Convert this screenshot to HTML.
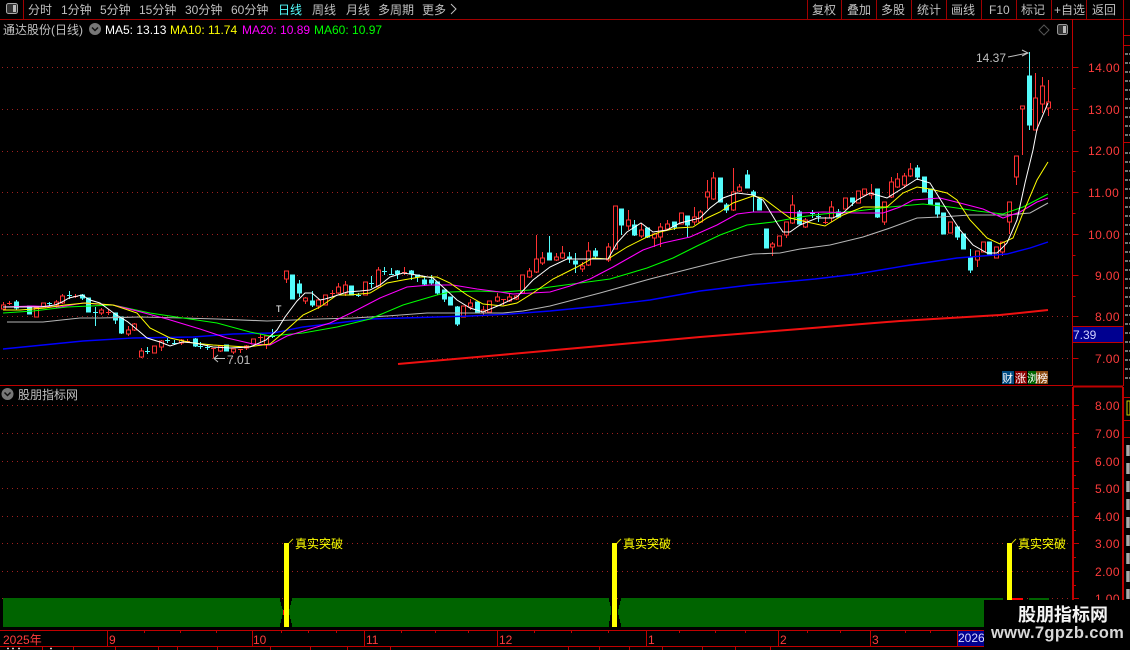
<!DOCTYPE html>
<html><head><meta charset="utf-8">
<style>
html,body{margin:0;padding:0;background:#000;width:1130px;height:650px;overflow:hidden}
svg{display:block;position:absolute;left:0;top:0}
text{font-family:"Liberation Sans","WenQuanYi Zen Hei","Noto Sans CJK SC",sans-serif;font-size:12px}
.t{fill:#c0c0c0}
.a{fill:#ff3c3c;font-size:13px;font-family:"Liberation Sans",sans-serif;letter-spacing:.4px}
.l{fill:#ff3c3c;font-size:13px}
.y{fill:#ffff00;font-size:12px}
</style></head><body>
<svg width="1130" height="650" viewBox="0 0 1130 650" xmlns="http://www.w3.org/2000/svg">
<rect width="1130" height="650" fill="#000"/>
<!-- toolbar -->
<g stroke="#a00000" stroke-width="1" fill="none" shape-rendering="crispEdges">
<path d="M0 19.500H1130M23.500 0V19M807.500 0V19M841.500 0V19M876.500 0V19M911.500 0V19M946.500 0V19M981.500 0V19M1016.500 0V19M1051.500 0V19M1086.500 0V19M1123.500 0V19"/>
</g>
<rect x="6.500" y="3.500" width="11" height="10" rx="2" fill="#333" stroke="#aaa"/>
<rect x="13" y="5" width="3" height="7" fill="#bbb"/>
<g class="t">
<text x="28" y="14">分时</text><text x="61" y="14">1分钟</text><text x="100" y="14">5分钟</text><text x="139" y="14">15分钟</text><text x="185" y="14">30分钟</text><text x="231" y="14">60分钟</text>
<text x="278" y="14" style="fill:#54fcfc">日线</text><text x="312" y="14">周线</text><text x="346" y="14">月线</text><text x="378" y="14">多周期</text><text x="422" y="14">更多</text>
<text x="812" y="14">复权</text><text x="847" y="14">叠加</text><text x="881" y="14">多股</text><text x="917" y="14">统计</text><text x="951" y="14">画线</text><text x="989" y="14">F10</text><text x="1021" y="14">标记</text><text x="1054" y="14">+自选</text><text x="1092" y="14">返回</text>
</g>
<path d="M451 4l5 5-5 5" fill="none" stroke="#c0c0c0"/>
<!-- header -->
<text x="3" y="34" class="t">通达股份(日线)</text>
<circle cx="95" cy="29" r="6" fill="#777"/><path d="M92 27.500l3 3 3-3" fill="none" stroke="#111" stroke-width="1.500"/>
<text x="105" y="34" fill="#fff">MA5: 13.13</text>
<text x="170" y="34" fill="#ff0">MA10: 11.74</text>
<text x="242" y="34" fill="#f0f">MA20: 10.89</text>
<text x="314" y="34" fill="#0f0">MA60: 10.97</text>
<path d="M1044 25l5 5-5 5-5-5z" fill="none" stroke="#555"/>
<rect x="1057.500" y="24.500" width="10" height="10" rx="2" fill="#333" stroke="#999"/><rect x="1063" y="26" width="3" height="7" fill="#bbb"/>
<!-- grid main -->
<g stroke="#a02020" stroke-width="1" stroke-dasharray="1 4" shape-rendering="crispEdges">
<path d="M2 67.500H1070M2 109.500H1070M2 151.500H1070M2 192.500H1070M2 234.500H1070M2 275.500H1070M2 316.500H1070M2 358.500H1070"/>
<path d="M2 405.500H1070M2 433.500H1070M2 461.500H1070M2 488.500H1070M2 516.500H1070M2 543.500H1070M2 571.500H1070M2 598.500H1070"/>
</g>
<!-- candle wicks & crosses -->
<g fill="none" stroke="#ff3232" stroke-width="1" shape-rendering="crispEdges">
<path d="M3.500 302V310M9.500 301V305M7 303.500h5M36.500 308V317M43.500 303V307M56.500 300V308M62.500 294V304M75.500 294V298M73 296.500h5M101.500 308V315M108.500 309V315M106 312.500h5M128.500 326V336M134.500 323V331M141.500 348V358M154.500 346V353M161.500 340V351M181.500 339V345M187.500 339V343M185 341.500h5M213.500 348V358M211 348.500h5M220.500 345V352M233.500 349V354M240.500 349V353M238 349.500h5M246.500 345V350M253.500 339V344M260.500 334V342M258 337.500h5M266.500 335V349M286.500 271V283M305.500 297V304M318.500 299V309M325.500 295V305M332.500 290V297M330 293.500h5M338.500 283V294M345.500 281V296M365.500 282V295M378.500 267V288M404.500 267V275M402 272.500h5M463.500 306V317M470.500 299V310M483.500 306V316M489.500 301V312M497.500 293V302M503.500 299V305M501 299.500h5M509.500 293V302M516.500 295V300M522.500 275V293M529.500 268V278M536.500 235V273M542.500 252V265M556.500 253V261M562.500 246V259M582.500 262V272M588.500 242V266M608.500 243V262M615.500 206V249M628.500 210V230M641.500 223V238M654.500 233V247M660.500 223V247M667.500 220V230M681.500 213V224M694.500 207V225M700.500 210V223M707.500 180V209M713.500 172V200M733.500 168V211M739.500 184V192M772.500 242V256M779.500 236V246M786.500 222V238M792.500 195V224M805.500 218V228M825.500 217V224M823 222.500h5M831.500 201V222M845.500 198V209M858.500 191V203M864.500 189V195M871.500 184V199M884.500 202V225M891.500 177V198M897.500 173V188M904.500 173V188M910.500 163V177M950.500 222V233M977.500 251V267M983.500 242V252M996.500 247V258M1002.500 242V256M1009.500 202V234M1016.500 156V185M1022.500 106V155M1035.500 73V130M1042.500 77V113M1048.500 80V116"/>
</g>
<g fill="#000" stroke="#ff3232" stroke-width="1" shape-rendering="crispEdges">
<path d="M1.500 305h4v4h-4zM34.500 308h4v9h-4zM41.500 303h4v4h-4zM54.500 302h4v3h-4zM60.500 296h4v7h-4zM99.500 310h4v3h-4zM126.500 330h4v4h-4zM132.500 324h4v6h-4zM139.500 351h4v6h-4zM152.500 346h4v7h-4zM159.500 341h4v6h-4zM179.500 340h4v3h-4zM218.500 346h4v5h-4zM231.500 349h4v3h-4zM244.500 346h4v2h-4zM251.500 339h4v5h-4zM264.500 336h4v9h-4zM284.500 271h4v8h-4zM303.500 298h4v3h-4zM316.500 300h4v6h-4zM323.500 295h4v10h-4zM336.500 287h4v6h-4zM343.500 285h4v8h-4zM363.500 282h4v13h-4zM376.500 270h4v17h-4zM461.500 306h4v11h-4zM468.500 303h4v4h-4zM481.500 310h4v3h-4zM487.500 301h4v11h-4zM495.500 297h4v4h-4zM507.500 297h4v4h-4zM514.500 296h4v3h-4zM520.500 275h4v18h-4zM527.500 271h4v6h-4zM534.500 259h4v13h-4zM540.500 258h4v5h-4zM554.500 257h4v3h-4zM560.500 253h4v5h-4zM580.500 266h4v3h-4zM586.500 251h4v14h-4zM606.500 247h4v13h-4zM613.500 206h4v43h-4zM626.500 220h4v6h-4zM639.500 230h4v6h-4zM652.500 234h4v4h-4zM658.500 227h4v10h-4zM665.500 224h4v5h-4zM679.500 213h4v11h-4zM692.500 217h4v5h-4zM698.500 212h4v10h-4zM705.500 192h4v5h-4zM711.500 178h4v21h-4zM731.500 192h4v18h-4zM737.500 187h4v4h-4zM770.500 244h4v3h-4zM777.500 236h4v10h-4zM784.500 222h4v13h-4zM790.500 205h4v18h-4zM803.500 220h4v7h-4zM829.500 207h4v11h-4zM843.500 198h4v11h-4zM856.500 191h4v12h-4zM862.500 189h4v6h-4zM869.500 193h4v2h-4zM882.500 202h4v20h-4zM889.500 182h4v15h-4zM895.500 179h4v8h-4zM902.500 176h4v9h-4zM908.500 169h4v7h-4zM948.500 222h4v11h-4zM975.500 251h4v9h-4zM981.500 242h4v10h-4zM994.500 247h4v11h-4zM1000.500 242h4v10h-4zM1007.500 202h4v20h-4zM1014.500 156h4v21h-4zM1020.500 106h4v3h-4zM1033.500 98h4v32h-4zM1040.500 86h4v18h-4zM1046.500 102h4v6h-4z"/>
</g>
<g fill="none" stroke="#54fcfc" stroke-width="1" shape-rendering="crispEdges">
<path d="M16.500 300V310M49.500 302V306M47 303.500h5M69.500 291V299M67 295.500h5M82.500 294V300M95.500 307V326M93 312.500h5M115.500 313V324M121.500 317V334M147.500 347V354M145 351.500h5M167.500 337V343M165 340.500h5M174.500 340V345M172 343.500h5M195.500 338V347M200.500 342V349M198 346.500h5M207.500 345V350M205 347.500h5M272.500 329V338M270 336.500h5M299.500 280V297M312.500 291V307M358.500 293V297M356 295.500h5M371.500 276V288M369 283.500h5M384.500 267V275M382 271.500h5M391.500 268V275M389 274.500h5M397.500 270V279M411.500 270V280M417.500 275V282M424.500 276V286M431.500 275V285M437.500 282V295M444.500 290V302M457.500 306V326M549.500 236V260M569.500 252V263M575.500 253V273M595.500 248V258M621.500 209V235M634.500 220V236M647.500 228V238M674.500 222V230M687.500 216V237M726.500 203V213M747.500 170V188M753.500 190V212M799.500 210V224M812.500 210V218M810 213.500h5M818.500 213V222M816 216.500h5M838.500 209V218M852.500 198V206M877.500 189V218M917.500 165V180M937.500 203V218M957.500 227V240M970.500 249V273M1029.500 52V130"/>
</g>
<g fill="#54fcfc" stroke="#54fcfc" stroke-width="1" shape-rendering="crispEdges">
<path d="M14.500 302h4v6h-4zM27.500 306h4v8h-4zM80.500 295h4v3h-4zM86.500 298h4v14h-4zM113.500 313h4v7h-4zM119.500 317h4v16h-4zM193.500 339h4v7h-4zM224.500 345h4v6h-4zM290.500 275h4v24h-4zM297.500 284h4v9h-4zM310.500 301h4v4h-4zM349.500 286h4v9h-4zM395.500 271h4v3h-4zM409.500 271h4v3h-4zM415.500 275h4v2h-4zM422.500 280h4v4h-4zM429.500 280h4v3h-4zM435.500 282h4v11h-4zM442.500 290h4v9h-4zM448.500 297h4v8h-4zM455.500 307h4v17h-4zM475.500 302h4v10h-4zM547.500 253h4v7h-4zM567.500 257h4v2h-4zM573.500 261h4v3h-4zM593.500 251h4v5h-4zM619.500 209h4v16h-4zM632.500 225h4v10h-4zM645.500 228h4v9h-4zM672.500 222h4v5h-4zM685.500 216h4v9h-4zM718.500 178h4v24h-4zM724.500 205h4v5h-4zM745.500 175h4v13h-4zM751.500 192h4v3h-4zM757.500 199h4v11h-4zM764.500 229h4v19h-4zM797.500 212h4v12h-4zM836.500 212h4v5h-4zM850.500 198h4v4h-4zM875.500 189h4v28h-4zM915.500 168h4v9h-4zM922.500 177h4v15h-4zM928.500 189h4v15h-4zM935.500 203h4v11h-4zM941.500 213h4v21h-4zM955.500 227h4v10h-4zM961.500 234h4v15h-4zM968.500 257h4v13h-4zM987.500 242h4v12h-4zM1027.500 76h4v49h-4z"/>
</g>
<!-- long MAs -->
<polyline fill="none" stroke="#f01010" stroke-width="2" points="398,364 500,355 600,346 700,337 800,329 900,321 1000,315 1048,310"/>
<polyline fill="none" stroke="#0000ff" stroke-width="1.400" points="3,349 43,345 83,341 133,338 193,337 233,334 273,333 303,327 337,323 370,319 403,318 437,317 470,316 510,314 550,311 600,306 650,300 700,291 750,285 815,279 857,274 910,265 957,258 1007,254 1030,248 1048,242"/>
<polyline fill="none" stroke="#b4b4b4" stroke-width="1.100" points="7,322 43,322 80,318 100,318 140,317 183,318 217,319 267,321 320,319 353,318 387,316 427,313 460,313 503,313 523,311 550,306 600,293 650,279 693,268 733,258 753,254 780,253 800,249 830,245 863,237 890,228 917,218 940,217 970,215 1007,215 1030,213 1048,203"/>
<polyline fill="none" stroke="#00ff00" stroke-width="1.100" points="3,313 33,311 67,307 113,305 150,313 183,318 217,323 250,332 270,336 303,333 337,327 370,319 403,305 437,295 450,292 477,291 503,292 530,290 550,287 580,283 610,279 647,268 673,258 697,246 720,235 747,225 773,222 800,217 823,214 857,211 890,207 923,204 950,207 977,211 1003,214 1023,207 1048,194"/>
<polyline fill="none" stroke="#ff00ff" stroke-width="1.100" points="3,307 33,306 60,307 83,303 113,305 137,311 167,319 200,329 227,338 253,344 270,345 287,336 307,330 330,323 353,312 380,298 407,287 430,285 453,285 477,289 500,292 513,294 550,292 570,286 590,279 613,267 643,250 663,243 690,237 717,225 737,214 753,212 780,212 800,213 823,212 857,213 883,213 900,207 913,200 940,198 960,203 983,209 1003,218 1020,212 1037,202 1048,198"/>
<polyline fill="none" stroke="#ffff00" stroke-width="1" points="3,310 20,310 45,308 65,305 85,303 113,305 137,313 150,328 170,338 193,343 213,345 247,347 270,344 283,333 303,315 320,307 337,295 350,295 370,293 387,283 403,280 420,277 437,277 450,283 467,295 483,304 503,306 517,303 533,293 553,279 577,267 593,258 608,259 627,247 647,237 660,232 677,228 693,227 707,218 720,212 733,203 753,196 763,198 783,213 790,218 807,222 825,226 843,215 863,207 887,207 903,193 917,187 930,189 947,193 957,200 970,220 987,238 1000,244 1013,238 1023,213 1037,180 1048,162"/>
<polyline fill="none" stroke="#ffffff" stroke-width="1" points="3,307 20,307 40,307 55,305 62,302 69,298 82,295 90,300 100,303 115,314 128,322 140,332 147,338 160,342 170,346 182,342 195,343 213,347 230,348 250,347 266,340 277,330 285,317 297,301 305,293 312,293 320,300 325,299 332,297 347,292 360,291 370,290 380,285 390,277 403,273 417,275 433,278 443,287 457,300 470,308 483,312 500,305 517,297 533,280 550,267 567,259 587,259 608,259 617,243 627,232 641,223 653,232 667,230 680,223 700,218 710,208 723,198 737,193 753,195 763,200 777,223 783,232 790,232 800,225 817,218 833,218 843,213 857,200 870,193 887,198 903,188 917,179 930,183 947,210 960,230 973,245 987,253 997,253 1007,243 1017,220 1025,183 1033,150 1037,129 1048,103"/>
<!-- annotations -->
<text x="976" y="62" class="t">14.37</text>
<path d="M1008 57l20-4M1022 50l6 3-6 3" fill="none" stroke="#c0c0c0"/>
<text x="227" y="364" class="t">7.01</text>
<path d="M225 358.500H214M218 355l-4 3.500 4 3.500" fill="none" stroke="#c0c0c0"/>
<text x="276" y="312" fill="#fff" style="font-size:9px">T</text>
<!-- badges -->
<rect x="1002" y="371" width="12" height="13" fill="#004a80"/><rect x="1015" y="371" width="12" height="13" fill="#8b0000"/><rect x="1028" y="371" width="8" height="13" fill="#006400"/><rect x="1036" y="371" width="12" height="13" fill="#8b4a10"/>
<g fill="#fff"><text x="1002" y="382" style="font-size:11px">财</text><text x="1015" y="382" style="font-size:11px">涨</text><text x="1027" y="382" style="font-size:11px">浏</text><text x="1037" y="382" style="font-size:11px">榜</text></g>
<!-- frames -->
<g stroke="#c00000" fill="none" stroke-width="1" shape-rendering="crispEdges">
<path d="M0 385.500H1072"/>
<path d="M1072.500 19V386"/>
<path d="M1123.500 19V386"/>
<path d="M1072.500 67.500h6M1072.500 109.500h6M1072.500 151.500h6M1072.500 192.500h6M1072.500 234.500h6M1072.500 275.500h6M1072.500 316.500h6M1072.500 358.500h6M1072.500 88.500h3M1072.500 130.500h3M1072.500 171.500h3M1072.500 213.500h3M1072.500 255.500h3M1072.500 296.500h3M1072.500 337.500h3"/>
<path d="M1073 326.500h50M1073 342.500h50M1123 35.500h7M1123 45.500h7M1123 142.500h7M1123 397.500h7M1123 420.500h7M1123 437.500h7"/>
<path d="M1073 405.500h6M1073 433.500h6M1073 461.500h6M1073 488.500h6M1073 516.500h6M1073 543.500h6M1073 571.500h6M1073 598.500h6M1073 419.500h3M1073 447.500h3M1073 475.500h3M1073 502.500h3M1073 530.500h3M1073 557.500h3M1073 585.500h3"/>
</g>
<rect x="1073" y="327" width="50" height="15" fill="#000090"/>
<text x="1073" y="339" fill="#d0d0ff">7.39</text>
<g stroke="#c00000" fill="none" stroke-width="2" shape-rendering="crispEdges">
<path d="M1073 386.500H1123M1073 387V630M1123 387V630"/>
</g>
<g class="a">
<text x="1088" y="72">14.00</text><text x="1088" y="114">13.00</text><text x="1088" y="155">12.00</text><text x="1088" y="197">11.00</text><text x="1088" y="239">10.00</text><text x="1095" y="280">9.00</text><text x="1095" y="321">8.00</text><text x="1095" y="363">7.00</text>
<text x="1095" y="410">8.00</text><text x="1095" y="438">7.00</text><text x="1095" y="466">6.00</text><text x="1095" y="493">5.00</text><text x="1095" y="521">4.00</text><text x="1095" y="548">3.00</text><text x="1095" y="576">2.00</text><text x="1095" y="603">1.00</text>
</g>
<!-- right edge fragments -->
<path d="M1125 54h5M1125 63h5M1125 72h5M1125 81h5M1125 90h5M1125 99h5M1125 108h5M1125 117h5M1125 126h5M1125 135h5M1125 153h5M1125 162h5M1125 171h5M1125 180h5M1125 189h5M1125 198h5M1125 207h5M1125 216h5M1125 225h5M1125 234h5M1125 243h5M1125 252h5M1125 261h5M1125 270h5M1125 279h5M1125 288h5M1125 297h5M1125 306h5M1125 315h5M1125 324h5M1125 333h5M1125 342h5M1125 351h5M1125 360h5M1125 369h5M1125 378h5" stroke="#999" stroke-width="1.500" stroke-dasharray="3 1"/>
<path d="M1127 401h3v14h-3z" fill="none" stroke="#cc0"/>
<path d="M1128 445v11M1128 463v11M1128 481v11M1128 499v11M1128 517v11M1128 535v11M1128 553v11M1128 571v11M1128 589v10" stroke="#aaa" stroke-width="3.500"/>
<!-- sub title -->
<circle cx="7.500" cy="394" r="6" fill="#777"/><path d="M4.500 392.500l3 3 3-3" fill="none" stroke="#111" stroke-width="1.500"/>
<text x="18" y="399" class="t">股朋指标网</text>
<!-- green bands -->
<g fill="#006400" shape-rendering="crispEdges">
<path d="M3 598H280V602H281V606H282V609H283V615H282V619H281V623H280V627H3Z"/>
<path d="M292 598H609V602H610V606H611V615H610V621H609V627H292V623H291V619H290V615H289V609H290V605H291V601H292Z" />
<path d="M621 598H1003V600H984V627H621V623H620V619H619V615H618V609H619V605H620V601H621Z"/>
<rect x="1029" y="598" width="20" height="2"/>
</g>
<rect x="1012" y="598" width="11" height="2" fill="#f00"/>
<rect x="283" y="610" width="1" height="5" fill="#f00"/>
<rect x="284" y="543" width="5" height="84" fill="#ff0"/>
<rect x="612" y="543" width="5" height="84" fill="#ff0"/>
<rect x="1007" y="543" width="5" height="57" fill="#ff0"/>
<path d="M289 543l4-4M617 543l4-4M1012 543l4-4" stroke="#cc0" fill="none"/>
<text x="295" y="548" class="y">真实突破</text>
<text x="623" y="548" class="y">真实突破</text>
<text x="1018" y="548" class="y">真实突破</text>
<!-- time axis -->
<g stroke="#c00000" fill="none" stroke-width="1" shape-rendering="crispEdges">
<path d="M0 630.500H1123M0 646.500H1130"/>
<path d="M107.500 630V646M252.500 630V646M364.500 630V646M497.500 630V646M646.500 630V646M778.500 630V646M870.500 630V646M957.500 630V646M984.500 630V646"/>
<path d="M144.500 630v3M180.500 630v3M216.500 630v3M281.500 630v3M308.500 630v3M336.500 630v3M401.500 630v3M435.500 630v3M468.500 630v3M534.500 630v3M571.500 630v3M608.500 630v3M679.500 630v3M715.500 630v3M745.500 630v3M807.500 630v3M840.500 630v3M905.500 630v3M930.500 630v3"/>
<path d="M42.500 646v4M73.500 646v4M115.500 646v4M158.500 646v4M177.500 646v4M217.500 646v4M270.500 646v4M310.500 646v4M347.500 646v4M390.500 646v4M568.500 646v4M599.500 646v4M629.500 646v4M662.500 646v4M702.500 646v4M735.500 646v4M770.500 646v4"/>
</g>
<path d="M7 648.500h2M12 648.500h2M18 648.500h2M50 648.500h2" stroke="#ccc" stroke-width="1.500" fill="none"/>
<rect x="958" y="631" width="26" height="15" fill="#000090"/>
<g class="l">
<text x="3" y="644">2025年</text><text x="109" y="644">9</text><text x="253" y="644">10</text><text x="366" y="644">11</text><text x="499" y="644">12</text><text x="648" y="644">1</text><text x="780" y="644">2</text><text x="872" y="644">3</text>
</g>
<text x="958" y="642" fill="#d8d8ff" style="font-size:12px">2026</text>
<!-- watermark -->
<rect x="984" y="600" width="146" height="50" fill="#000"/>
<text x="1018" y="621" fill="#f4f4f4" style="font-size:18px;font-weight:bold;font-family:'Liberation Sans','Noto Sans CJK SC',sans-serif">股朋指标网</text>
<text x="991" y="638" fill="#d8d8d8" style="font-size:16.500px;font-weight:bold;letter-spacing:.35px">www.7gpzb.com</text>
</svg>
</body></html>
